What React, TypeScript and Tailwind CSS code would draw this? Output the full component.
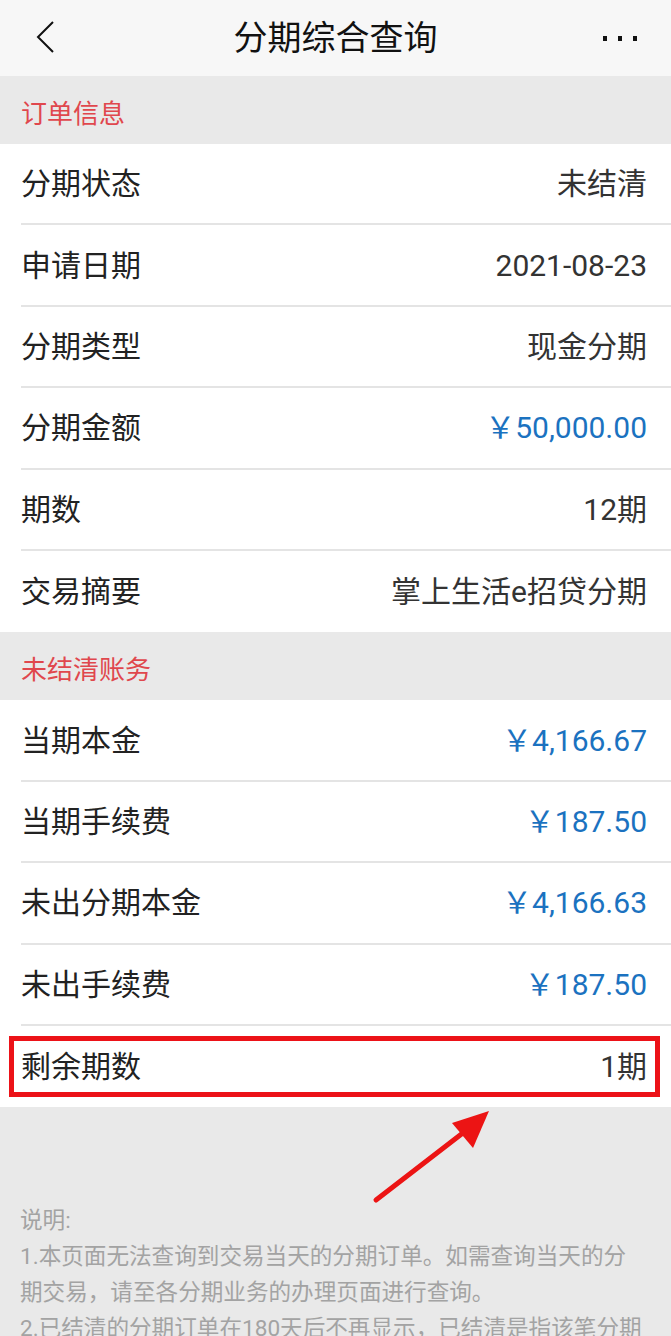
const font = "font-['Roboto','Noto_Sans_CJK_SC',sans-serif]";

type Row = { label: string; value: string; blue?: boolean };

const orderRows: Row[] = [
  { label: "分期状态", value: "未结清" },
  { label: "申请日期", value: "2021-08-23" },
  { label: "分期类型", value: "现金分期" },
  { label: "分期金额", value: "￥50,000.00", blue: true },
  { label: "期数", value: "12期" },
  { label: "交易摘要", value: "掌上生活e招贷分期" },
];

const unpaidRows: Row[] = [
  { label: "当期本金", value: "￥4,166.67", blue: true },
  { label: "当期手续费", value: "￥187.50", blue: true },
  { label: "未出分期本金", value: "￥4,166.63", blue: true },
  { label: "未出手续费", value: "￥187.50", blue: true },
];

function InfoRow({ row, last }: { row: Row; last?: boolean }) {
  return (
    <div className="pl-[21px] bg-white">
      <div
        className={`h-[81.4px] flex items-center justify-between pr-[24px] ${
          last ? "" : "border-b-2 border-[#e4e4e4]"
        }`}
      >
        <span className="text-[30px] text-[#222]">{row.label}</span>
        <span className={`text-[30px] ${row.blue ? "text-[#1b72c0]" : "text-[#333]"}`}>{row.value}</span>
      </div>
    </div>
  );
}

function SectionTitle({ title }: { title: string }) {
  return (
    <div className="h-[68px] bg-[#e9e9e9] flex items-center pl-[21px] pt-[8px]">
      <span className="text-[26px] text-[#e0474d]">{title}</span>
    </div>
  );
}

export default function App() {
  return (
    <div className={`w-[671px] h-[1336px] overflow-hidden bg-[#e9e9e9] ${font}`}>
      {/* Top bar */}
      <div className="h-[76px] bg-[#f7f7f7] flex items-center justify-between px-[30px] relative">
        <svg width="24" height="36" viewBox="0 0 24 36" className="ml-[4px]">
          <path d="M19 2 L4 17 L19 32" fill="none" stroke="#111" strokeWidth="2" />
        </svg>
        <span className="absolute left-0 right-0 text-center text-[34px] text-[#111] pointer-events-none">分期综合查询</span>
        <div className="flex gap-[11px] mr-[4px]">
          <span className="w-[4px] h-[5px] bg-[#111]" />
          <span className="w-[4px] h-[5px] bg-[#111]" />
          <span className="w-[4px] h-[5px] bg-[#111]" />
        </div>
      </div>

      <SectionTitle title="订单信息" />
      {orderRows.map((r, i) => (
        <InfoRow key={r.label} row={r} last={i === orderRows.length - 1} />
      ))}

      <SectionTitle title="未结清账务" />
      {unpaidRows.map((r) => (
        <InfoRow key={r.label} row={r} />
      ))}
      <div className="relative">
        <InfoRow row={{ label: "剩余期数", value: "1期" }} last />
        <div className="absolute left-[9px] right-[11px] top-[10px] bottom-[10px] border-[5px] border-[#ec1218] pointer-events-none" />
      </div>

      {/* Notes */}
      <div className="relative px-[20px] pt-[96px] text-[22.6px] leading-[36px] text-[#a3a3a3] whitespace-nowrap">
        <svg className="absolute left-[370px] top-[0px]" width="130" height="100" viewBox="0 0 130 100">
          <line x1="6" y1="93" x2="98" y2="22" stroke="#ec1414" strokeWidth="5" strokeLinecap="round" />
          <polygon points="119,4 82,16 103,41" fill="#ec1414" />
        </svg>
        <p>说明:</p>
        <p>
          1.本页面无法查询到交易当天的分期订单。如需查询当天的分
          <br />
          期交易，请至各分期业务的办理页面进行查询。
        </p>
        <p>
          2.已结清的分期订单在180天后不再显示，已结清是指该笔分期
          <br />
          订单已全部入账。
        </p>
      </div>
    </div>
  );
}
